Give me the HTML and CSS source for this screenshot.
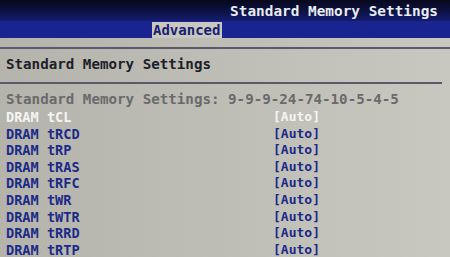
FILE: index.html
```html
<!DOCTYPE html>
<html lang="en">

<head>
    <meta charset="UTF-8">
    <title>Standard Memory Settings</title>
    <link rel="stylesheet" href="styles.css">
</head>

<body>
    <div class="top-bar">
        <span class="page-title">Standard Memory Settings</span>
    </div>
    <div class="tab-bar">
        <span class="tab active">Advanced</span>
    </div>

    <div class="main">
        <div class="rule"></div>
        <h1 class="heading">Standard Memory Settings</h1>
        <div class="rule short"></div>

        <p class="summary">Standard Memory Settings: 9-9-9-24-74-10-5-4-5</p>

        <div class="rows">
            <div class="row selected"><span class="label">DRAM tCL</span><span class="value">[Auto]</span></div>
            <div class="row"><span class="label">DRAM tRCD</span><span class="value">[Auto]</span></div>
            <div class="row"><span class="label">DRAM tRP</span><span class="value">[Auto]</span></div>
            <div class="row"><span class="label">DRAM tRAS</span><span class="value">[Auto]</span></div>
            <div class="row"><span class="label">DRAM tRFC</span><span class="value">[Auto]</span></div>
            <div class="row"><span class="label">DRAM tWR</span><span class="value">[Auto]</span></div>
            <div class="row"><span class="label">DRAM tWTR</span><span class="value">[Auto]</span></div>
            <div class="row"><span class="label">DRAM tRRD</span><span class="value">[Auto]</span></div>
            <div class="row"><span class="label">DRAM tRTP</span><span class="value">[Auto]</span></div>
        </div>
    </div>
</body>

</html>
```

FILE: styles.css
```css
* {
    padding: 0;
    margin: 0;
    box-sizing: border-box;
}

body {
    width: 450px;
    height: 257px;
    overflow: hidden;
    font-family: 'DejaVu Sans Mono', 'Liberation Mono', monospace;
    font-size: 14px;
    background: linear-gradient(90deg, #b4b4ac 0%, #c0c0b8 60%, #c8c8c0 100%);
}

.top-bar {
    height: 21px;
    display: flex;
    justify-content: flex-end;
    align-items: center;
    padding-right: 12px;
    background: linear-gradient(180deg, #07081c 0%, #0d1244 55%, #141c70 100%);
}

.page-title {
    color: #e8ecf4;
    font-size: 14.4px;
    font-weight: bold;
}

.tab-bar {
    height: 17px;
    display: flex;
    align-items: flex-end;
    padding-left: 152px;
    background: #1a2490;
}

.tab {
    height: 16px;
    line-height: 16px;
    padding: 0 2px 0 1px;
    font-weight: bold;
    color: #1a2070;
}

.tab.active {
    background: #c8c8c0;
}

.main {
    padding-top: 9px;
}

.rule {
    height: 2px;
    background: #5a5a6c;
}

.rule.short {
    margin-right: 8px;
}

.heading {
    font-size: 14.2px;
    font-weight: bold;
    color: #202028;
    padding: 7px 6px 9px;
    line-height: 17px;
}

.summary {
    padding: 7px 6px 0;
    line-height: 17px;
    font-size: 14.2px;
    color: #6a6a6c;
    font-weight: bold;
}

.rows {
    padding-left: 6px;
    padding-top: 1px;
}

.row {
    display: flex;
    height: 16.6px;
    line-height: 16.6px;
    color: #1c2a88;
    font-weight: bold;
    font-size: 13.6px;
}

.row.selected {
    color: #f4f4f4;
}

.label {
    width: 267px;
}

.value {
    font-size: 13px;
}
```
